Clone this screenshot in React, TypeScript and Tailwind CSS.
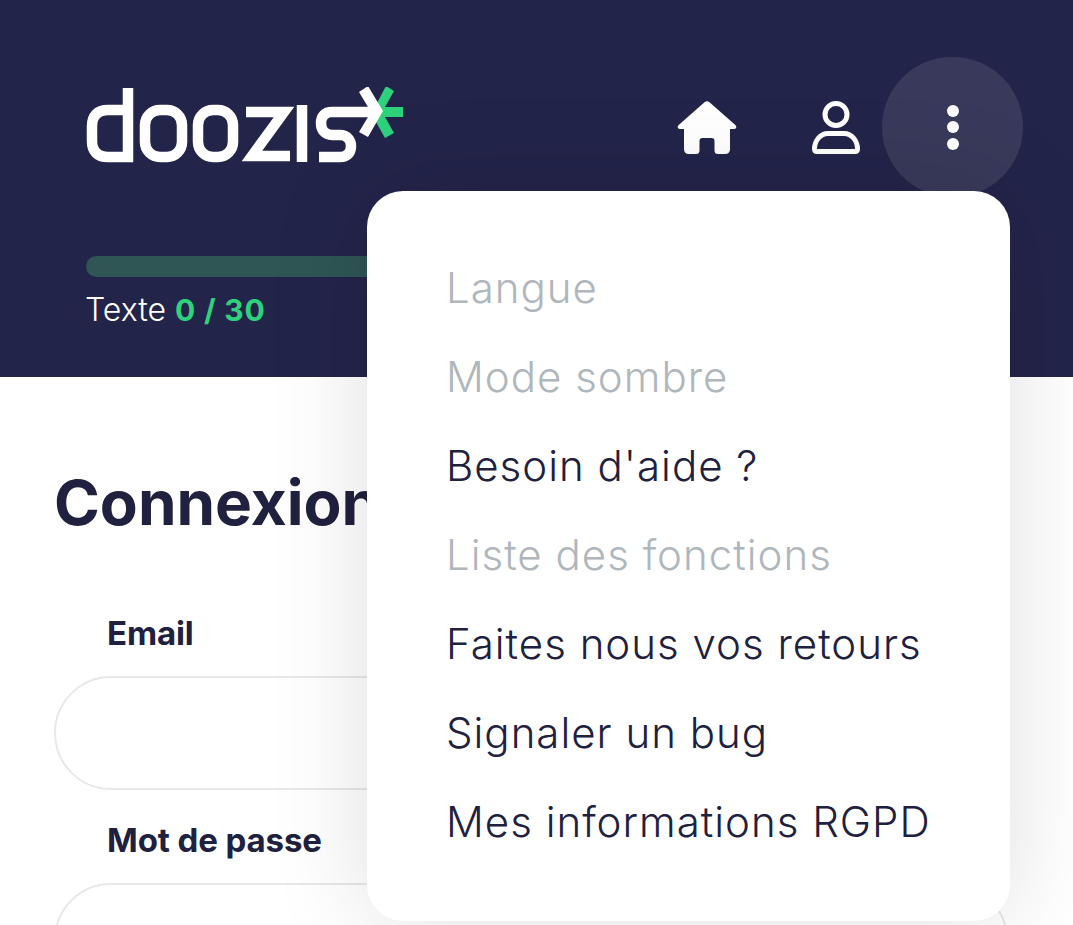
const items: [string, boolean][] = [
  ["Langue", true],
  ["Mode sombre", true],
  ["Besoin d'aide ?", false],
  ["Liste des fonctions", true],
  ["Faites nous vos retours", false],
  ["Signaler un bug", false],
  ["Mes informations RGPD", false],
];

function Logo() {
  return (
    <svg width="320" height="76" viewBox="86 87 320 76" className="-mt-[4px] block" fill="none">
      <polygon points="386,86 394,91 385,107 403,107 403,117 385,117 394,133 385,138 376,122 376,105" fill="#2fd27c" />
      <g stroke="#ffffff" strokeWidth="10.5">
        <path d="M128 88V157H108C97 157 92 151 92 141V126C92 116 97 110 108 110H128" />
        <rect x="145" y="110" width="37" height="47" rx="15" />
        <rect x="198" y="110" width="35" height="47" rx="15" />
        <path d="M246 112H284L252 156H290" />
        <path d="M302 105V162" />
        <path d="M319 157H340C348 157 351 152 351 146C351 140 347 135 340 135H332C325 135 321 130 321 123C321 116 325 112 332 112H374" />
      </g>
      <polygon points="359,92 368,86 383,111 368,137 359,132 371,112" fill="#ffffff" />
    </svg>
  );
}

function HomeIcon() {
  return (
    <svg width="60" height="53" viewBox="0 0 60 53" className="block">
      <path
        d="M27.5 1.2Q30 -0.6 32.5 1.2L58.6 24.3Q60.6 27.4 57 28H53V48Q53 53 48 53H41Q37.5 53 37.5 49.5V40Q37.5 37 34.5 37H25.5Q22.5 37 22.5 40V49.5Q22.5 53 19 53H12Q7 53 7 48V28H3Q-0.6 27.4 1.4 24.3Z"
        fill="#ffffff"
      />
    </svg>
  );
}

function UserIcon() {
  return (
    <svg width="48" height="53" viewBox="0 0 48 53" fill="none" className="block">
      <circle cx="24" cy="13.5" r="11" stroke="#ffffff" strokeWidth="5" />
      <path
        d="M16 32.5H32C40 32.5 45.5 40 45.5 48C45.5 49.8 44.6 50.5 43 50.5H5C3.4 50.5 2.5 49.8 2.5 48C2.5 40 8 32.5 16 32.5Z"
        stroke="#ffffff"
        strokeWidth="5"
      />
    </svg>
  );
}

function Field({ label }: { label: string }) {
  return (
    <div className="flex flex-col">
      <label className="pl-[53px] text-[33px] leading-[44px] font-bold tracking-[-0.1px] text-[#20203f]">{label}</label>
      <div className="mt-[21px] h-[114px] shrink-0 rounded-full border-2 border-[#e8e8e8] bg-white" />
    </div>
  );
}

export default function App() {
  return (
    <div className="relative h-[925px] w-full overflow-hidden bg-white font-['Inter',sans-serif]">
      <header className="h-[377px] bg-[#23244a] pl-[86px] pr-[50px]">
        <div className="flex items-center justify-between pt-[57px]">
          <Logo />
          <nav className="flex items-center">
            <HomeIcon />
            <div className="ml-[75px] mr-[22px]">
              <UserIcon />
            </div>
            <button className="flex h-[140px] w-[141px] flex-col items-center justify-center gap-[4.5px] rounded-full bg-[#393a5b]">
              <span className="h-3 w-3 rounded-full bg-white" />
              <span className="h-3 w-3 rounded-full bg-white" />
              <span className="h-3 w-3 rounded-full bg-white" />
            </button>
          </nav>
        </div>
        <div className="mr-[36px] mt-[59px] h-[21px] rounded-full bg-[#2f5555]" />
        <p className="-ml-px mt-[12px] text-[32px] leading-[42px] font-light text-white">
          Texte <span className="text-[30px] font-bold tracking-[0.8px] text-[#2fd27c]">0 / 30</span>
        </p>
      </header>

      <main className="pl-[54px] pr-[65px] pt-[90px]">
        <h1 className="text-[62px] leading-[72px] font-bold text-[#20203f]">Connexion</h1>
        <div className="mt-[72px] flex flex-col gap-[28px]">
          <Field label="Email" />
          <Field label="Mot de passe" />
        </div>
      </main>

      <div className="absolute left-[367px] top-[191px] w-[643px] rounded-[36px] bg-white pb-[55px] pl-[79px] pt-[52px] shadow-[0_0_100px_rgba(0,0,0,0.13)]">
        <ul>
          {items.map(([text, muted]) => (
            <li
              key={text}
              className={`h-[89px] text-[42px] leading-[89px] font-[350] tracking-[1px] ${muted ? "text-[#afb6bc]" : "text-[#20203f]"}`}
            >
              {text}
            </li>
          ))}
        </ul>
      </div>
    </div>
  );
}
